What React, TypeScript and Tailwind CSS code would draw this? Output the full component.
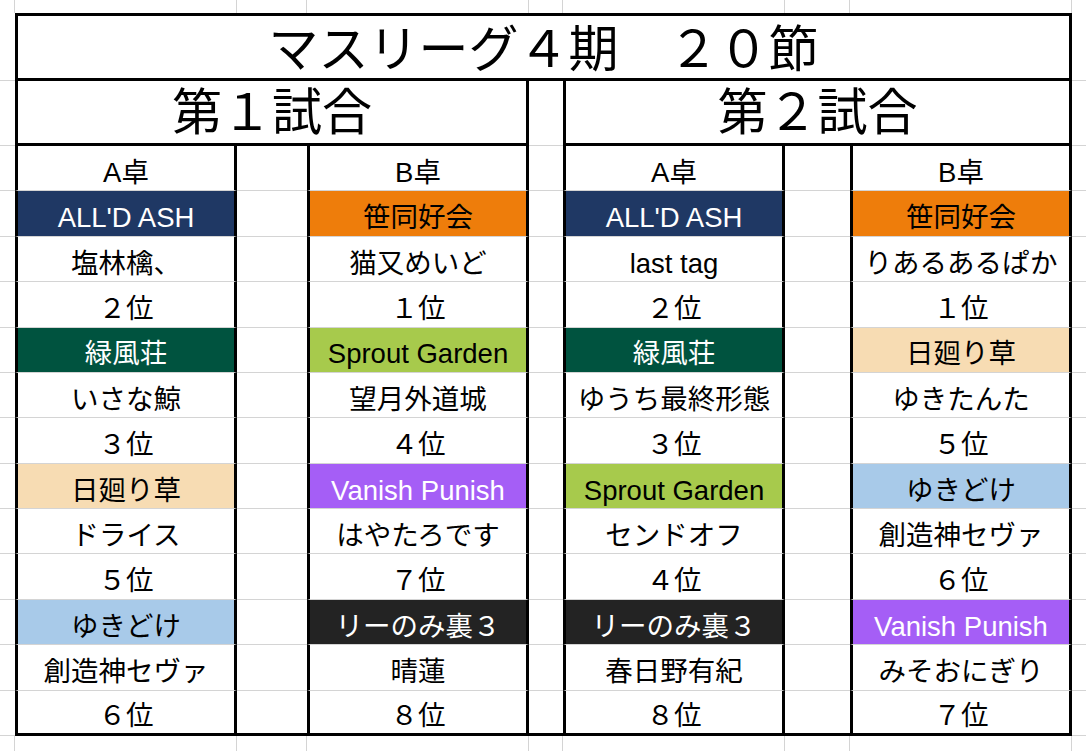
import React from "react";

type Fill = "none" | "navy" | "orange" | "green" | "lime" | "wheat" | "purple" | "blue" | "black";

const FILL: Record<Fill, string> = {
  none: "bg-white text-black",
  navy: "bg-[#1f3864] text-white",
  orange: "bg-[#ee7d0b] text-black",
  green: "bg-[#00533f] text-white",
  lime: "bg-[#a7ca4c] text-black",
  wheat: "bg-[#f7dcb3] text-black",
  purple: "bg-[#a55ef6] text-white",
  blue: "bg-[#a8cae9] text-black",
  black: "bg-[#232323] text-white",
};

type Cell = [string, Fill];

const COLS: Cell[][] = [
  [
    ["A卓", "none"],
    ["ALL'D ASH", "navy"],
    ["塩林檎、", "none"],
    ["２位", "none"],
    ["緑風荘", "green"],
    ["いさな鯨", "none"],
    ["３位", "none"],
    ["日廻り草", "wheat"],
    ["ドライス", "none"],
    ["５位", "none"],
    ["ゆきどけ", "blue"],
    ["創造神セヴァ", "none"],
    ["６位", "none"],
  ],
  [
    ["B卓", "none"],
    ["笹同好会", "orange"],
    ["猫又めいど", "none"],
    ["１位", "none"],
    ["Sprout Garden", "lime"],
    ["望月外道城", "none"],
    ["４位", "none"],
    ["Vanish Punish", "purple"],
    ["はやたろです", "none"],
    ["７位", "none"],
    ["リーのみ裏３", "black"],
    ["晴蓮", "none"],
    ["８位", "none"],
  ],
  [
    ["A卓", "none"],
    ["ALL'D ASH", "navy"],
    ["last tag", "none"],
    ["２位", "none"],
    ["緑風荘", "green"],
    ["ゆうち最終形態", "none"],
    ["３位", "none"],
    ["Sprout Garden", "lime"],
    ["センドオフ", "none"],
    ["４位", "none"],
    ["リーのみ裏３", "black"],
    ["春日野有紀", "none"],
    ["８位", "none"],
  ],
  [
    ["B卓", "none"],
    ["笹同好会", "orange"],
    ["りあるあるぱか", "none"],
    ["１位", "none"],
    ["日廻り草", "wheat"],
    ["ゆきたんた", "none"],
    ["５位", "none"],
    ["ゆきどけ", "blue"],
    ["創造神セヴァ", "none"],
    ["６位", "none"],
    ["Vanish Punish", "purple"],
    ["みそおにぎり", "none"],
    ["７位", "none"],
  ],
];

const GRID = "border-[#d4d4d4]";

function MarginRow() {
  return (
    <>
      <div className={`border-r ${GRID}`} />
      <div className={`border-r ${GRID}`} />
      <div className={`border-r ${GRID}`} />
      <div className={`border-r ${GRID}`} />
      <div className={`border-r ${GRID}`} />
      <div className={`border-r ${GRID}`} />
      <div className={`border-r ${GRID}`} />
      <div className={`border-r ${GRID}`} />
      <div />
    </>
  );
}

function BoxCell({ cell, last }: { cell: Cell; last: boolean }) {
  const [text, fill] = cell;
  return (
    <div
      className={`flex items-center justify-center whitespace-nowrap pt-[9px] leading-none border-x-[3px] border-x-black ${
        last ? "border-b-[3px] border-b-black" : "border-b border-b-[#d4d4d4]"
      } ${FILL[fill]}`}
    >
      {text}
    </div>
  );
}

function Spacer({ last }: { last: boolean }) {
  return <div className={last ? "border-b-[3px] border-b-black" : "border-b border-b-[#d4d4d4]"} />;
}

export default function App() {
  const rows = Array.from({ length: 13 }, (_, i) => i);
  return (
    <div className="grid h-[751px] w-full overflow-hidden bg-white text-black font-['Liberation_Sans','Noto_Sans_CJK_JP',sans-serif] text-[27.5px] grid-cols-[15px_222px_70px_222px_34px_222px_65px_222px_1fr] grid-rows-[13px_68px_65px_repeat(13,45.385px)_1fr]">
      <MarginRow />

      {/* title row */}
      <div className={`border-b ${GRID}`} />
      <div className="col-span-7 flex items-center justify-center border-[3px] border-black pt-[5px] text-[50px] leading-none whitespace-nowrap">
        マスリーグ４期　２０節
      </div>
      <div className={`border-b ${GRID}`} />

      {/* match row */}
      <div className={`border-b ${GRID}`} />
      <div className="col-span-3 flex items-center justify-center border-x-[3px] border-b-[3px] border-black pt-[2px] text-[50px] leading-none whitespace-nowrap">
        第１試合
      </div>
      <div className={`border-b ${GRID}`} />
      <div className="col-span-3 flex items-center justify-center border-x-[3px] border-b-[3px] border-black pt-[2px] text-[50px] leading-none whitespace-nowrap">
        第２試合
      </div>
      <div className={`border-b ${GRID}`} />

      {rows.map((r) => {
        const last = r === 12;
        return (
          <React.Fragment key={r}>
            <div className={`border-b ${GRID}`} />
            <BoxCell cell={COLS[0][r]} last={last} />
            <Spacer last={last} />
            <BoxCell cell={COLS[1][r]} last={last} />
            <Spacer last={last} />
            <BoxCell cell={COLS[2][r]} last={last} />
            <Spacer last={last} />
            <BoxCell cell={COLS[3][r]} last={last} />
            <div className={`border-b ${GRID}`} />
          </React.Fragment>
        );
      })}

      <MarginRow />
    </div>
  );
}
